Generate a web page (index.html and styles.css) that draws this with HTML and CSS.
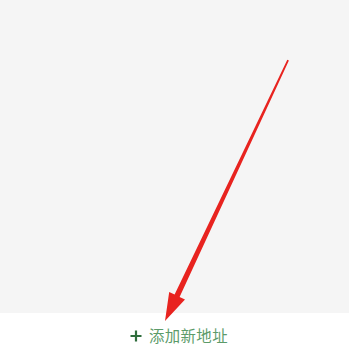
FILE: index.html
```html
<!DOCTYPE html>
<html lang="zh">
<head>
<meta charset="utf-8">
<link rel="stylesheet" href="styles.css">
</head>
<body>
<div class="page">
  <div class="content"></div>
  <div class="bottom-bar">
    <div class="add-btn">
      <svg class="plus" width="12" height="12" viewBox="0 0 12 12"><path d="M6 0.5V11.5M0.5 6H11.5" stroke="#2f6d3c" stroke-width="2.2"/></svg>
      <span class="label">添加新地址</span>
    </div>
  </div>
  <svg class="arrow" width="349" height="347" viewBox="0 0 349 347">
    <polygon points="287.3,59.7 288.9,60.4 179.6,297 185,299.6 165,321 169.2,291.9 174.6,294.4" fill="#e8231f"/>
  </svg>
</div>
</body>
</html>
```
FILE: styles.css
```css
html, body {
  margin: 0;
  padding: 0;
  width: 349px;
  height: 347px;
  overflow: hidden;
}
.page {
  position: relative;
  width: 349px;
  height: 347px;
  display: flex;
  flex-direction: column;
  background: #f5f5f5;
  font-family: "Noto Sans CJK SC", "Noto Sans", sans-serif;
}
.content {
  flex: 1;
}
.bottom-bar {
  height: 34px;
  background: #ffffff;
  display: flex;
  align-items: flex-start;
  padding-left: 130px;
  box-sizing: border-box;
}
.add-btn {
  display: flex;
  align-items: center;
  gap: 7px;
  margin-top: 14px;
  height: 17px;
}
.plus {
  display: block;
  flex: none;
}
.label {
  color: #5c9b69;
  font-size: 15.4px;
  letter-spacing: 0.4px;
  line-height: 17px;
}
.arrow {
  position: absolute;
  left: 0;
  top: 0;
}
```
